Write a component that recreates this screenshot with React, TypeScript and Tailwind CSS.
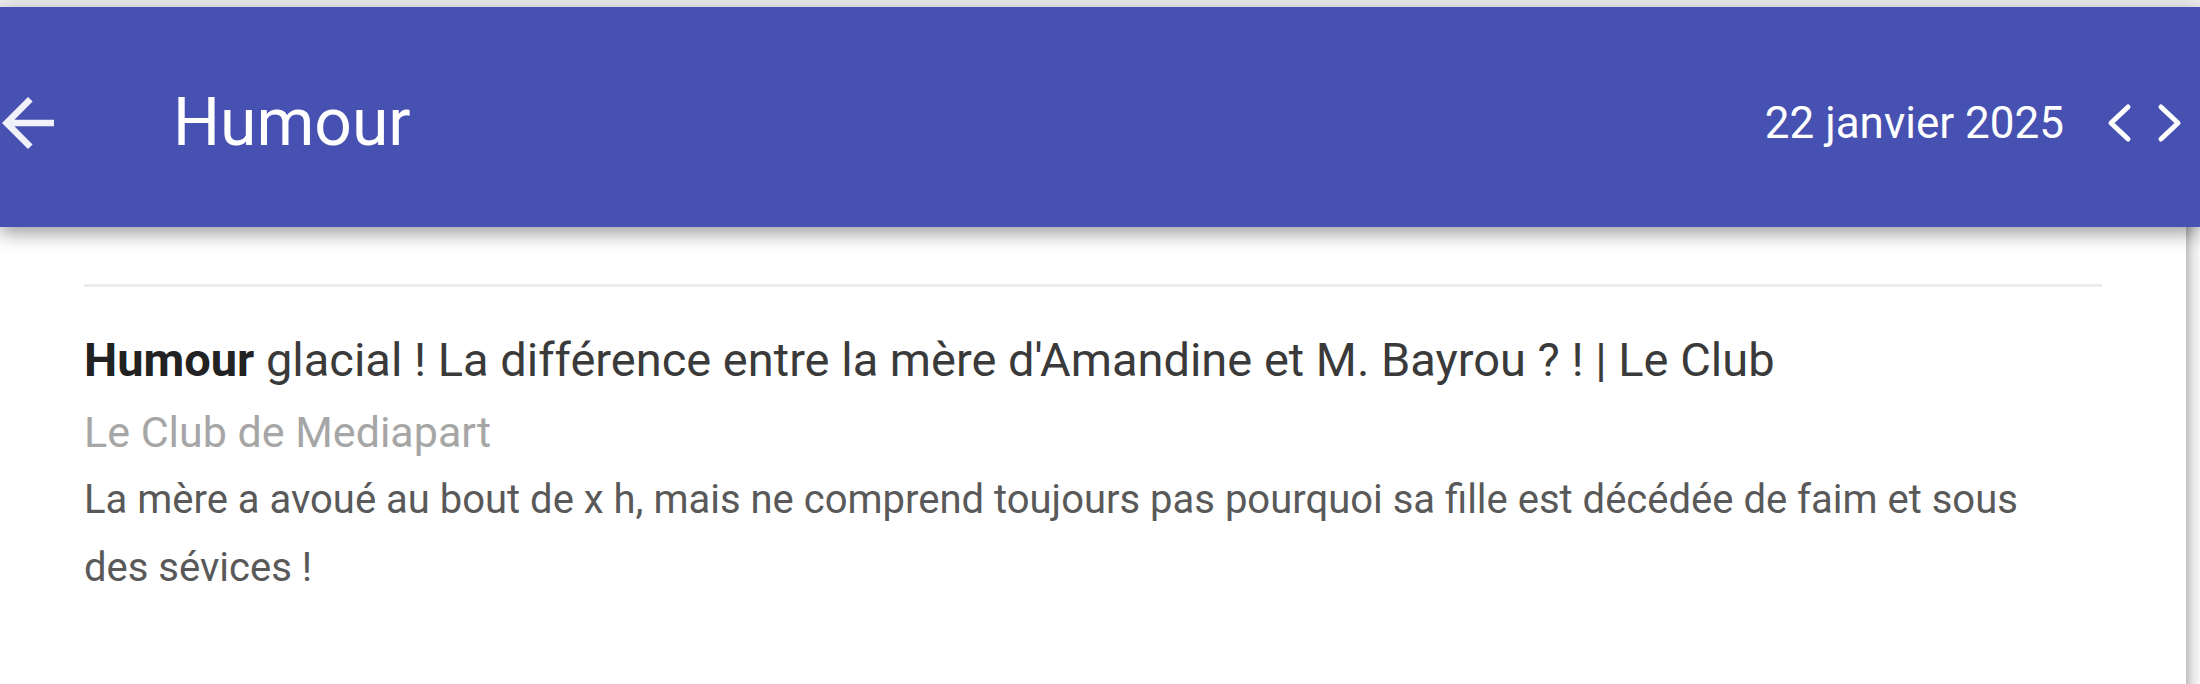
import React from "react";

const ARTICLE = {
  keyword: "Humour",
  title: " glacial ! La différence entre la mère d'Amandine et M. Bayrou ? ! | Le Club",
  source: "Le Club de Mediapart",
  summary:
    "La mère a avoué au bout de x h, mais ne comprend toujours pas pourquoi sa fille est décédée de faim et sous des sévices !",
};

function BackArrow() {
  return (
    <svg viewBox="4 4 16 16" className="h-[52px] w-[52px] shrink-0" fill="rgba(255,255,255,0.92)">
      <path d="M20 11H7.83l5.59-5.59L12 4l-8 8 8 8 1.41-1.41L7.83 13H20v-2z" />
    </svg>
  );
}

function Chevron({ dir }: { dir: "left" | "right" }) {
  return (
    <svg viewBox="0 0 26 40" className="h-[40px] w-[26px]" fill="none" stroke="white" strokeWidth={5} strokeLinecap="round" strokeLinejoin="round">
      {dir === "left" ? <polyline points="22,4 5,20 22,36" /> : <polyline points="4,4 21,20 4,36" />}
    </svg>
  );
}

export default function App() {
  return (
    <div className="flex h-[684px] w-[2200px] flex-col overflow-hidden bg-white font-['Roboto','Liberation_Sans',sans-serif]">
      <div className="h-[7px] shrink-0 bg-[#ececec]" />
      <header className="relative z-10 flex h-[220px] shrink-0 items-center bg-[#4651b1] pt-[11px] pl-[2px] pr-[17px] text-white shadow-[0_6px_18px_rgba(0,0,0,0.4)]">
        <BackArrow />
        <h1 className="ml-[119px] text-[66px] leading-none font-normal">Humour</h1>
        <div className="ml-auto flex items-center">
          <span className="text-[44px] leading-none">22 janvier 2025</span>
          <div className="ml-[42px] flex items-center gap-[25px]">
            <Chevron dir="left" />
            <Chevron dir="right" />
          </div>
        </div>
      </header>
      <div className="flex flex-1">
        <main className="w-[2186px] shrink-0 bg-white px-[84px] pt-[57px]">
          <div className="h-[3px] bg-[#ebebeb]" />
          <article className="mt-[41px]">
            <h2 className="text-[47px] leading-[64px] text-[#3a3a3a]">
              <span className="font-bold text-[#222]">{ARTICLE.keyword}</span>
              {ARTICLE.title}
            </h2>
            <div className="mt-[6px] text-[43px] leading-[68px] text-[#a6a6a6]">{ARTICLE.source}</div>
            <p className="pr-[70px] text-[40px] leading-[68px] text-[#595959]">{ARTICLE.summary}</p>
          </article>
        </main>
        <div className="flex-1 bg-linear-to-r from-[#c2c2c2] via-[#e6e6e6] to-[#f8f8f8]" />
      </div>
    </div>
  );
}
